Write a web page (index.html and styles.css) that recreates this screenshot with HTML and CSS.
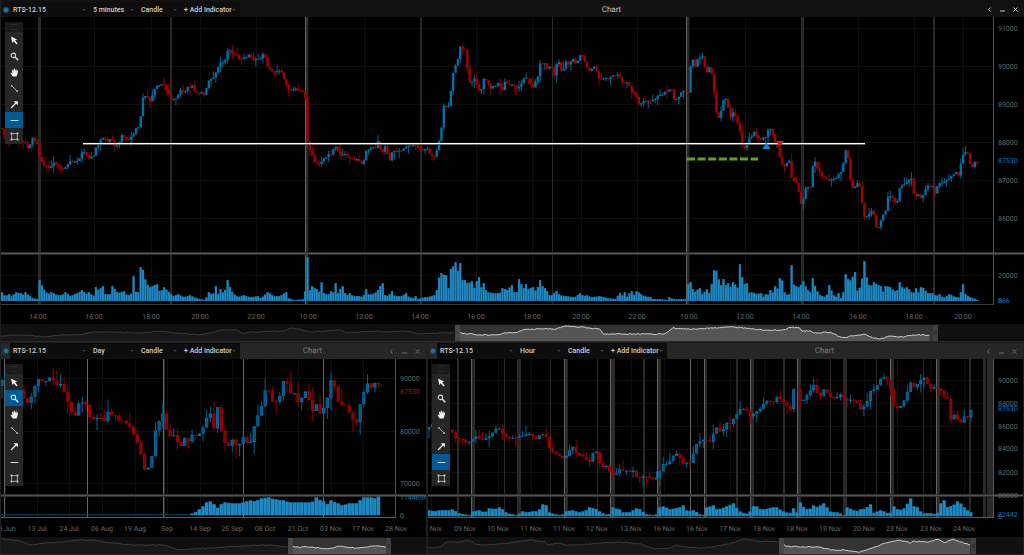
FILE: index.html
```html
<!DOCTYPE html>
<html lang="en">
<head>
<meta charset="utf-8">
<title>RTS-12.15 Charts</title>
<link rel="stylesheet" href="styles.css">
</head>
<body>
<svg class="sprite" aria-hidden="true">
  <symbol id="i-cursor" viewBox="0 0 16 16"><path d="M2 1l11 5.500-4 1.200 4.500 5.500-2.200 1.800L6.800 9.500 4 12.500z" fill="#f2f2f2"/></symbol>
  <symbol id="i-zoom" viewBox="0 0 16 16"><circle cx="6" cy="6" r="4" fill="none" stroke="#dcdcdc" stroke-width="1.800"/><path d="M9 9l5.500 5.500" stroke="#dcdcdc" stroke-width="2.800"/></symbol>
  <symbol id="i-hand" viewBox="0 0 16 16"><path d="M5 15L1.500 10c-.8-1.400.8-2.300 1.900-1.300l1 .9L3.600 4.300c-.2-1.500 1.600-1.800 2-.4L6.300 6 6.600 2.200c.1-1.500 2-1.500 2.100 0L8.900 6l1.200-3.200c.6-1.300 2.200-.8 1.900.6L11.300 6.500l1.300-1.600c1-1 2.300-.2 1.700 1L13 11.500 11.500 15z" fill="#f2f2f2"/></symbol>
  <symbol id="i-segment" viewBox="0 0 16 16"><path d="M3 3l10 10" stroke="#c4c4c4" stroke-width="1.500"/><path d="M2 2h2.500v2.500H2zM11.500 11.500H14V14h-2.500z" fill="#cfcfcf"/></symbol>
  <symbol id="i-arrow" viewBox="0 0 16 16"><path d="M2 14l9-9" stroke="#f2f2f2" stroke-width="2.400"/><path d="M6.500 2H14v7.500z" fill="#f2f2f2"/></symbol>
  <symbol id="i-line" viewBox="0 0 16 16"><path d="M1 8h14" stroke="#d5d5d5" stroke-width="1.800"/></symbol>
  <symbol id="i-rect" viewBox="0 0 16 16"><path d="M3 3h10v10H3z" fill="none" stroke="#bdbdbd" stroke-width="1.500"/><path d="M1 1h3v3H1zM12 1h3v3h-3zM1 12h3v3H1zM12 12h3v3h-3z" fill="#cfcfcf"/></symbol>
</svg>
<main class="workspace">
  <section class="panel panel-main" data-chart="main" data-tool="line" data-interval="5 minutes"></section>
  <section class="panel" data-chart="day" data-tool="zoom" data-interval="Day"></section>
  <section class="panel" data-chart="hour" data-tool="line" data-interval="Hour"></section>
</main>
<script src="charts.js"></script>
</body>
</html>
```
FILE: styles.css
```css
* { box-sizing: border-box; }
body {
  margin: 0;
  background: #1c1c1c;
  color: #c8c8c8;
  font-family: Roboto, "Noto Sans", sans-serif;
  font-size: 7px;
  text-rendering: geometricPrecision;
}
.sprite { position: absolute; width: 0; height: 0; }
.workspace {
  display: grid;
  grid-template-columns: 427fr 597fr;
  grid-template-rows: 342fr 213fr;
  min-height: 100vh;
}
.panel {
  display: flex;
  flex-direction: column;
  min-width: 0;
  border-left: 1px solid #202020;
  border-bottom: 1px solid #2a2a2a;
  background: #000;
}
.panel + .panel { border-right: 1px solid #202020; }
.panel-main { grid-column: 1 / -1; }
.bar {
  display: flex;
  align-items: center;
  height: 17px;
  background: #262626;
  border-top: 1px solid #1c1c1c;
}
.panel-main .bar { background: #121212; border-top: 2px solid #111; }
.link-dot { width: 9px; flex: none; display: flex; justify-content: center; }
.link-dot::before {
  content: "";
  width: 4px;
  height: 4px;
  border-radius: 50%;
  background: #1d7aa8;
  border: 1px solid #174a63;
}
.fields { display: flex; align-items: center; height: 100%; background: #0d0d0d; width: 230px; flex: none; }
.field { position: relative; display: flex; align-items: center; height: 100%; }
.field::after {
  content: "";
  margin-left: auto;
  margin-right: 4px;
  border: 2px solid transparent;
  border-top-color: #3a3a3a;
  border-bottom: 0;
}
.field-symbol { width: 80px; }
.field-interval { width: 48px; }
.field-style { width: 43px; }
.field-add { width: 59px; }
.field select, .field button {
  appearance: none;
  border: 0;
  background: transparent;
  color: #d0d0d0;
  font: 500 7px/14px Roboto, "Noto Sans", sans-serif;
  padding: 0 0 0 3px;
  margin: 0;
  white-space: nowrap;
}
.title {
  flex: 1;
  margin: 0;
  text-align: center;
  font-size: 8px;
  font-weight: 400;
  line-height: 14px;
  color: #7a7a7a;
}
.panel-main .title { color: #c4c4c4; }
.window-buttons { display: flex; margin-right: 2px; }
.window-buttons button {
  width: 13px;
  height: 14px;
  padding: 0;
  border: 0;
  background: transparent;
  display: grid;
  place-items: center;
}
.window-buttons svg { width: 5px; height: 5px; stroke: #6c6c6c; fill: none; }
.panel-main .window-buttons svg { stroke: #c4c4c4; }
.stage { position: relative; flex: 1; min-height: 120px; }
.plot, .navigator svg { position: absolute; inset: 0; width: 100%; height: 100%; display: block; }
.plot text { font-size: 7px; fill: #686868; }
.plot .last { fill: #0f76b0; }
.plot .last-down { fill: #b01010; }
.palette {
  position: absolute;
  left: 4px;
  top: 5px;
  width: 18px;
  background: #262626;
}
.grip { height: 10px; background: #1b1b1b; display: grid; place-items: center; }
.grip::before { content: ""; width: 6px; height: 4px; border: solid #2c2c2c; border-width: 1px 0; }
.palette button {
  display: grid;
  place-items: center;
  width: 18px;
  height: 16px;
  padding: 0;
  border: 0;
  background: transparent;
}
.palette button[aria-pressed="true"] { background: #005a93; }
.palette svg { width: 9px; height: 9px; }
.navigator { position: relative; height: 17px; background: #101010; flex: none; }
```
FILE: charts.js
```js
const pairs = s => s.trim().split(/\s+/).map(p => p.split(',').map(Number));

const charts = {
  main: {
    x0: 1, y0: 17, w: 1023, h: 307, step: 2.35, end: 978, noise: 1.6, wick: 7,
    axis: 993, split: 253, floor: 304, zero: 301, labelX: 998, timeY: 319,
    price: pairs(`1,128 3,133 6,138 14,140 22,142 25,144 28,148 33,138 38,145 40,158 45,166 50,168 54,162 58,166 64,169 70,160 76,162 83,152 88,158 93,158 97,146 101,140 104,137 108,141 112,139 115,146 118,145 122,135 127,138 130,139 135,130 140,126 142,97 146,95 150,102 153,95 156,84 160,87 163,82 168,94 172,100 177,97 180,90 184,92 188,87 192,86 197,93 205,94 208,80 214,78 217,68 221,61 225,62 228,50 232,52 236,53 240,59 244,59 248,55 252,59 258,60 264,53 268,68 273,71 280,69 284,78 288,90 294,88 300,90 304,94 306,103 308,155 310,150 314,162 320,164 323,157 330,154 336,148 341,156 347,155 352,159 356,158 360,164 363,163 367,147 371,149 375,148 378,141 381,153 385,147 390,160 393,150 397,152 402,150 405,146 410,147 414,144 418,149 422,151 426,147 430,153 433,158 436,152 439,140 442,125 444,105 448,108 451,90 453,72 457,63 460,47 463,50 465,49 468,73 470,84 474,79 477,85 481,93 483,80 487,80 490,90 494,85 499,84 502,92 506,80 509,86 512,83 517,88 520,85 525,76 529,80 532,88 537,79 540,64 544,63 548,69 551,66 554,75 557,63 560,63 562,73 566,63 569,65 573,58 576,64 580,54 582,54 587,68 590,72 594,68 599,77 603,80 607,79 611,75 618,76 624,83 628,84 633,93 637,98 640,106 644,100 649,103 655,99 662,94 667,92 672,89 674,99 679,97 682,91 688,94 690,68 693,61 696,68 698,57 702,56 706,72 709,68 712,74 714,92 716,112 719,119 722,107 724,98 726,100 729,112 731,117 734,110 736,118 739,127 741,140 743,149 746,145 750,137 754,133 757,138 762,138 766,137 769,128 773,133 775,143 779,153 781,162 785,166 788,160 791,165 792,186 795,178 798,190 802,210 804,192 807,186 811,189 812,170 814,158 817,168 821,175 826,178 832,181 837,176 842,170 846,147 849,163 851,187 854,190 858,183 861,190 863,213 866,218 870,212 873,210 876,227 879,227 882,215 885,215 887,198 890,195 894,200 897,203 900,187 904,184 908,182 911,178 914,195 918,195 922,198 925,189 929,186 932,186 935,193 938,183 945,181 951,177 955,172 959,176 962,155 965,153 969,155 971,167 974,164 978,161`),
    volume: pairs(`2,9 5,5 10,7 12,4 15,9 20,8 22,5 25,9 30,5 33,3 38,2 40,21 43,13 48,7 52,9 57,6 62,6 66,9 70,5 75,7 83,11 86,7 90,9 93,4 97,14 99,10 102,15 105,7 111,7 113,15 118,8 124,10 127,6 131,6 134,25 136,9 139,9 141,34 144,30 146,18 150,14 157,17 160,9 165,14 168,9 174,5 178,7 184,4 190,6 196,3 205,1 209,9 213,6 216,15 218,7 221,12 224,7 228,21 230,14 233,8 238,4 243,6 250,4 258,5 261,3 268,9 274,5 280,5 286,9 288,3 295,1 304,2 305,7 307,44 309,10 313,15 316,12 319,8 321,19 324,8 328,6 331,10 333,7 335,18 338,8 342,15 345,8 348,6 350,8 353,5 360,5 363,4 366,12 369,6 375,8 378,11 382,18 384,6 389,5 391,10 395,5 402,5 406,8 409,4 413,3 415,5 418,2 424,4 428,4 434,6 436,5 438,21 441,28 445,26 447,13 450,13 452,32 455,39 458,30 460,38 462,21 466,21 468,17 471,20 474,12 476,19 479,24 481,13 483,18 487,9 494,8 500,8 502,13 508,11 511,16 513,9 518,9 520,22 523,11 525,17 528,12 532,14 535,10 538,14 541,21 543,13 546,13 549,6 552,6 556,10 560,6 566,5 575,4 580,8 584,5 586,6 592,4 600,5 608,3 616,2 619,8 622,5 624,9 626,3 631,10 634,6 637,10 640,8 644,5 650,4 652,2 660,2 668,1 670,4 673,2 686,2 688,17 691,19 694,8 699,13 703,6 706,12 709,7 713,22 715,31 717,30 720,16 722,14 724,22 727,12 729,18 732,11 734,19 737,13 739,15 741,37 743,16 746,18 748,8 752,9 757,7 760,8 763,4 765,7 767,4 770,11 772,7 776,15 778,12 781,23 783,19 785,6 790,7 792,36 794,16 799,14 804,20 807,11 810,7 813,23 816,12 820,6 826,4 830,16 833,6 836,4 838,8 841,3 844,9 846,27 849,20 852,22 854,29 856,12 858,10 861,16 865,40 867,22 870,14 874,19 880,15 883,9 886,15 891,14 894,10 898,11 900,19 903,12 907,14 910,11 913,7 916,13 919,8 922,14 924,13 927,8 933,8 936,5 940,7 943,3 950,7 955,4 958,3 961,9 963,17 965,7 970,4 976,2 978,1`),
    rows: [[28, '91000'], [66, '90000'], [104, '89000'], [142, '88000'], [180, '87000'], [218, '86000'], [275, '20000']],
    marks: [[160, '87530', 'last'], [300, '0', ''], [300, '566', 'last']],
    columns: [[38, '1400'], [94, '1600'], [151, '1800'], [200, '2000'], [256, '2200'], [308, '1000'], [364, '1200'], [420, '1400'], [476, '1600'], [532, '1800'], [581, '2000'], [637, '2200'], [689, '1000'], [745, '1200'], [801, '1400'], [858, '1600'], [914, '1800'], [963, '2000']].map(([x, t]) => [x, t.slice(0, 2) + ':' + t.slice(2)]),
    sessions: [[38, 3], [170, 2], [305, 3, 1], [420, 2], [552, 1], [686, 3, 1], [801, 3], [933, 2]],
    nav: { y0: 324, from: 455, to: 938, end: 930, line: pairs(`2,336 15,335 30,335 44,337 60,335 80,335 93,332 110,332 140,333 160,331 175,333 200,335 215,332 218,330 238,330 242,334 250,332 285,331 290,328 300,329 310,332 340,330 347,333 375,331 385,332 405,331 420,334 440,333 458,333 472,334 478,335 495,335 505,333 518,332 525,329 555,329 565,326 580,327 600,329 603,334 665,334 673,328 682,329 700,329 710,328 735,327 763,330 785,330 790,327 799,328 802,331 810,331 815,333 830,332 838,336 845,338 850,336 865,334 870,337 880,339 890,336 900,337 915,335 930,335`) }
  },
  day: {
    x0: 1, y0: 359, w: 425, h: 179, step: 3.655, end: 382, noise: 0.8, wick: 13,
    axis: 395, split: 496, floor: 518, zero: 516, labelX: 400, timeY: 532,
    price: pairs(`1,386 4,371 8,376 15,384 22,392 26,405 30,401 34,387 38,380 41,378 44,384 48,376 52,378 56,386 59,382 63,389 66,397 70,408 74,419 77,412 80,399 84,404 88,408 91,425 95,417 99,420 102,418 106,423 109,406 113,420 116,416 120,422 125,422 128,425 132,430 136,440 139,446 142,459 146,476 149,465 153,452 156,427 160,421 164,412 168,440 172,435 175,437 179,447 182,447 186,436 189,444 193,433 197,437 201,431 204,425 208,414 211,414 214,428 217,402 220,427 223,437 226,447 230,445 233,439 237,448 240,443 243,438 247,443 250,444 254,428 258,415 261,408 265,390 269,391 273,402 277,403 280,396 284,379 288,385 291,395 295,394 298,403 302,397 306,391 310,403 313,413 316,404 320,413 324,408 327,399 331,381 335,388 338,401 341,405 345,404 349,412 353,420 357,423 360,405 363,396 367,383 371,387 375,383 379,383 382,391`),
    volume: pairs(`1,1 190,1 195,3 200,6 203,9 207,13 212,14 217,7 221,11 225,13 232,12 240,12 250,15 255,14 262,17 268,18 275,16 282,15 290,13 300,13 312,13 316,18 322,14 327,11 331,15 337,12 342,10 350,12 357,12 363,18 372,18 375,17 378,19 382,19`),
    rows: [[378, '90000'], [431, '80000'], [484, '70000'], [516, '0']],
    marks: [[391, '87530', 'last-down'], [498, '1144694', 'last']],
    columns: [[5, '30 Jun'], [37, '13 Jul'], [69, '24 Jul'], [102, '06 Aug'], [135, '19 Aug'], [167, 'Sep'], [200, '14 Sep'], [232, '25 Sep'], [265, '08 Oct'], [298, '21 Oct'], [331, '03 Nov'], [363, '17 Nov'], [396, '28 Nov']],
    sessions: [[4, 1, 1], [87, 1, 1], [163, 2, 1], [243, 1, 1], [323, 1, 1]],
    nav: { y0: 538, from: 288, to: 391, end: 387, line: pairs(`2,540 18,541 30,546 45,544 60,543 80,541 92,541 105,543 130,546 165,546 178,551 190,550 210,549 225,548 240,547 270,546 285,548 294,548 310,548 326,550 340,547 355,549 375,547 387,548`) }
  },
  hour: {
    x0: 428, y0: 359, w: 595, h: 179, step: 3.345, end: 974, noise: 0.9, wick: 9,
    axis: 993, split: 496, floor: 518, zero: 517, labelX: 998, timeY: 532,
    price: pairs(`428,430 432,424 440,427 450,430 452,433 455,438 460,439 466,442 470,441 474,437 478,436 481,442 485,439 489,437 491,431 494,434 497,428 501,431 505,438 509,439 515,439 521,437 528,433 532,437 537,439 541,435 545,433 548,446 552,452 558,455 563,458 568,454 572,446 575,454 580,455 585,460 589,464 593,454 597,453 600,466 604,469 606,465 610,472 615,476 618,470 626,471 630,473 634,471 637,479 641,479 645,475 651,481 657,477 661,471 664,462 668,465 671,458 676,453 679,455 681,465 687,463 692,464 694,449 698,443 702,442 704,438 708,443 712,441 715,427 719,430 722,433 727,422 731,426 735,416 741,408 746,409 751,418 755,412 760,410 764,403 768,399 772,405 776,396 781,399 786,404 790,411 793,390 797,390 801,404 805,398 810,392 814,384 818,397 821,396 824,389 828,395 834,399 840,394 845,400 850,399 856,402 861,411 865,406 868,400 871,389 876,389 881,378 886,378 890,387 893,405 898,410 902,405 907,393 910,382 914,388 920,381 925,377 929,388 934,388 939,388 943,395 946,404 948,397 950,420 955,414 960,425 965,416 968,418 972,408 974,408`),
    volume: pairs(`428,6 435,5 440,6 450,6 454,7 458,3 464,2 471,1 474,5 478,6 485,4 490,8 495,7 498,9 502,7 505,4 511,2 518,1 521,5 528,4 533,5 538,5 543,12 547,11 549,4 555,2 562,1 566,5 572,6 580,4 586,6 591,9 597,7 602,3 609,1 613,9 618,7 622,4 630,4 636,8 641,7 645,2 656,1 660,9 664,10 670,7 675,8 680,9 684,11 687,5 694,6 700,2 705,1 708,9 713,11 717,7 722,8 727,10 733,13 737,8 741,4 749,2 752,10 758,10 761,6 765,7 772,9 778,9 782,5 790,3 793,8 797,4 800,14 804,9 809,6 813,11 818,9 823,13 827,9 831,4 838,4 844,1 847,9 852,7 856,5 862,7 866,8 870,12 873,3 880,6 884,5 890,2 893,10 899,6 905,8 910,18 914,10 918,9 922,3 930,3 937,2 940,12 943,16 947,9 953,11 959,15 965,8 970,4 974,2`),
    rows: [[380, '90000'], [403, '88000'], [426, '86000'], [449, '84000'], [473, '82000'], [496, '80000']],
    marks: [[408, '87530', 'last'], [517, '0', ''], [515, '22442', 'last']],
    columns: [[431, '09 Nov'], [465, '09 Nov'], [498, '10 Nov'], [531, '11 Nov'], [564, '11 Nov'], [597, '12 Nov'], [631, '13 Nov'], [664, '16 Nov'], [697, '16 Nov'], [730, '17 Nov'], [764, '18 Nov'], [797, '18 Nov'], [830, '19 Nov'], [864, '20 Nov'], [897, '23 Nov'], [931, '23 Nov'], [964, '24 Nov']],
    sessions: [[457, 2], [471, 4, 1], [504, 1], [517, 4], [550, 1], [564, 4, 1], [597, 1], [610, 5, 1], [643, 2], [657, 4, 1], [690, 1, 1], [704, 3, 1], [736, 2], [750, 4, 1], [783, 2], [797, 4, 1], [830, 1], [843, 4], [876, 1], [890, 4, 1], [923, 1], [936, 4, 1], [969, 2], [983, 3], [987, 6]],
    nav: { y0: 538, from: 779, to: 976, end: 970, line: pairs(`428,549 440,548 447,543 460,543 468,541 478,546 500,545 515,543 531,541 545,543 548,546 558,544 566,546 580,546 600,544 620,543 640,545 655,550 670,549 675,546 685,548 700,549 712,548 728,545 738,542 745,540 755,542 780,543 785,547 800,548 820,548 832,551 845,551 860,553 870,550 885,544 900,541 910,544 913,542 928,543 938,540 944,544 952,540 964,544 970,546`) }
  }
};

const tools = [['cursor', 'Select'], ['zoom', 'Zoom'], ['hand', 'Pan'], ['segment', 'Segment'], ['arrow', 'Arrow'], ['line', 'Horizontal line'], ['rect', 'Rectangle']];

function at(points, x) {
  if (x <= points[0][0]) return points[0][1];
  for (let i = 1; i < points.length; i++) {
    const [x1, y1] = points[i - 1], [x2, y2] = points[i];
    if (x <= x2) return y1 + (y2 - y1) * (x - x1) / (x2 - x1);
  }
  return points[points.length - 1][1];
}

// Highest value inside one bar's width, so that single-bar spikes keep their height.
function peak(points, x, step) {
  const inside = points.filter(p => Math.abs(p[0] - x) <= step / 2).map(p => p[1]);
  return Math.max(at(points, x), ...inside);
}

function random(seed) {
  return () => (seed = (seed * 16807) % 2147483647) / 2147483647;
}

const rect = (x, y, w, h, fill, extra = '') => `<rect x="${x.toFixed(2)}" y="${y.toFixed(2)}" width="${w.toFixed(2)}" height="${h.toFixed(2)}" fill="${fill}" ${extra}/>`;

function drawPlot(svg, c, name) {
  const W = svg.clientWidth, H = svg.clientHeight, sx = W / c.w, sy = H / c.h;
  const X = x => (x - c.x0) * sx, Y = y => (y - c.y0) * sy;
  const rnd = random(name === 'main' ? 77 : 41);
  let o = '';
  const crisp = 'shape-rendering="crispEdges"';
  for (const [y] of c.rows) o += rect(0, Y(y), X(c.axis), 1, '#0f0f0f', crisp);
  for (const [x] of c.columns) if (x < c.axis) o += rect(X(x), 0, 1, Y(c.floor), '#0f0f0f', crisp);
  for (const [x, w, bright] of c.sessions) {
    o += rect(X(x), 0, w * sx, Y(c.floor), '#292929', crisp);
    if (bright) o += rect(X(x), 0, 1, Y(c.floor), '#646464', crisp);
  }
  o += rect(0, Y(c.split - 1), W, 3, '#303030', crisp) + rect(0, Y(c.split), W, 1, '#525252', crisp);
  o += rect(0, Y(c.floor), X(c.axis), 1, name === 'main' ? '#383838' : '#5c5c5c', crisp) + rect(X(c.axis), 0, 1, Y(c.floor) + 1, '#525252', crisp);

  let open = at(c.price, c.x0);
  for (let x = c.x0 + 1; x <= c.end; x += c.step) {
    const close = at(c.price, x) + (rnd() - 0.5) * 2 * c.noise;
    const up = close <= open, top = Math.min(open, close), h = Math.max(1, Math.abs(close - open));
    const hi = top - rnd() ** 2.5 * c.wick, lo = top + h + rnd() ** 2.5 * c.wick;
    const b = c.step * (name === 'main' ? 1 : 0.88);
    o += rect(X(x - 0.5), Y(hi), sx, (lo - hi) * sy, up ? '#00618f' : '#8a0000');
    o += rect(X(x - b / 2), Y(top), b * sx, h * sy, up ? '#0071a8' : '#a80000');
    if (b > 2.5 && h > 2.5) o += rect(X(x - b / 2 + 0.8), Y(top + 0.8), (b - 1.6) * sx, (h - 1.6) * sy, up ? '#005680' : '#860000');
    open = close;
    const v = peak(c.volume, x, c.step);
    const dim = v < 1.5 && name === 'day';
    o += rect(X(x - c.step / 2), Y(c.zero - v), c.step * sx, v * sy, dim ? '#0b415f' : '#11638f');
    if (!dim) o += rect(X(x - c.step / 2 + 0.3), Y(c.zero - v + 0.5), (c.step - 0.6) * sx, Math.max(0.5, v - 0.5) * sy, '#1f88c0');
  }
  if (name === 'main') {
    o += rect(X(83), Y(143), 782 * sx, 1, '#fff', crisp) + rect(X(83), Y(144), 782 * sx, 1, '#6a6a6a', crisp);
    o += `<path d="M${X(687)} ${Y(159)}H${X(758)}" stroke="#5ea21e" stroke-width="3" stroke-dasharray="8 2.6"/>`;
    o += `<path d="M${X(766.5)} ${Y(142)}l4 7h-8z" fill="#0f8ad0"/><path d="M${X(780)} ${Y(147)}l4-6h-8z" fill="#d01c1c"/>`;
  }
  for (const [y, t] of c.rows) o += `<text x="${X(c.labelX)}" y="${Y(y) + 3}">${t}</text>`;
  for (const [y, t, k] of c.marks) o += `<text class="${k}" x="${X(c.labelX)}" y="${Y(y) + 3}">${t}</text>`;
  for (const [x, t] of c.columns) o += `<text x="${X(x)}" y="${Y(c.timeY)}" text-anchor="middle">${t}</text>`;
  svg.innerHTML = o;
}

function drawNavigator(svg, c) {
  const n = c.nav, W = svg.clientWidth, H = svg.clientHeight, sx = W / c.w;
  const X = x => (x - c.x0) * sx, Y = y => y - n.y0;
  const rnd = random(9);
  const trace = (a, b) => {
    const pts = [];
    for (let x = a; x <= b; x += 1.5) pts.push(X(x).toFixed(1) + ' ' + (Y(at(n.line, x)) + rnd() - 0.5).toFixed(1));
    return pts.join('L');
  };
  const live = trace(n.from + 5, n.end);
  svg.innerHTML =
    `<path d="M${X(c.x0)} ${H}L${trace(c.x0, n.from)}V${H}z" fill="#181818"/>` +
    `<path d="M${trace(c.x0, n.from)}" fill="none" stroke="#3c3c3c"/>` +
    rect(X(n.from), 1, (n.to - n.from) * sx, H - 1, '#333') +
    `<path d="M${X(n.from + 5)} ${H}L${live}V${H}z" fill="#555"/>` +
    `<path d="M${live}" fill="none" stroke="#d0d0d0"/>` +
    rect(X(n.from), 1, 5, H - 1, '#484848') + rect(X(n.to) - 5, 1, 5, H - 1, '#404040') +
    rect(X(n.to) - 4, H / 2 - 1, 3, 1, '#222') + rect(X(n.to) - 4, H / 2 + 1, 3, 1, '#222');
}

const views = [...document.querySelectorAll('.panel')].map(panel => {
  const { chart, tool, interval } = panel.dataset;
  panel.innerHTML = `
    <header class="bar">
      <span class="link-dot"></span>
      <div class="fields">
        <div class="field field-symbol"><select aria-label="Symbol"><option>RTS-12.15</option></select></div>
        <div class="field field-interval"><select aria-label="Interval"><option>${interval}</option></select></div>
        <div class="field field-style"><select aria-label="Chart style"><option>Candle</option></select></div>
        <div class="field field-add"><button type="button" aria-haspopup="menu">+ Add Indicator</button></div>
      </div>
      <h2 class="title">Chart</h2>
      <div class="window-buttons">
        <button type="button" aria-label="Back"><svg viewBox="0 0 5 5"><path d="M3.500 .5l-2 2 2 2"/></svg></button>
        <button type="button" aria-label="Minimize"><svg viewBox="0 0 5 5"><path d="M0 4h5"/></svg></button>
        <button type="button" aria-label="Close"><svg viewBox="0 0 5 5"><path d="M.5 .5l4 4M4.500 .5l-4 4"/></svg></button>
      </div>
    </header>
    <div class="stage">
      <svg class="plot" role="img" aria-label="${interval} price and volume"></svg>
      <div class="palette"><div class="grip"></div>${tools.map(([id, label]) =>
        `<button type="button" aria-label="${label}" aria-pressed="${id === tool}"><svg><use href="#i-${id}"/></svg></button>`).join('')}</div>
    </div>
    <div class="navigator"><svg aria-hidden="true"></svg></div>`;
  return { name: chart, plot: panel.querySelector('.plot'), nav: panel.querySelector('.navigator svg') };
});

function draw() {
  for (const v of views) {
    drawPlot(v.plot, charts[v.name], v.name);
    drawNavigator(v.nav, charts[v.name]);
  }
}
draw();
addEventListener('resize', draw);
```
